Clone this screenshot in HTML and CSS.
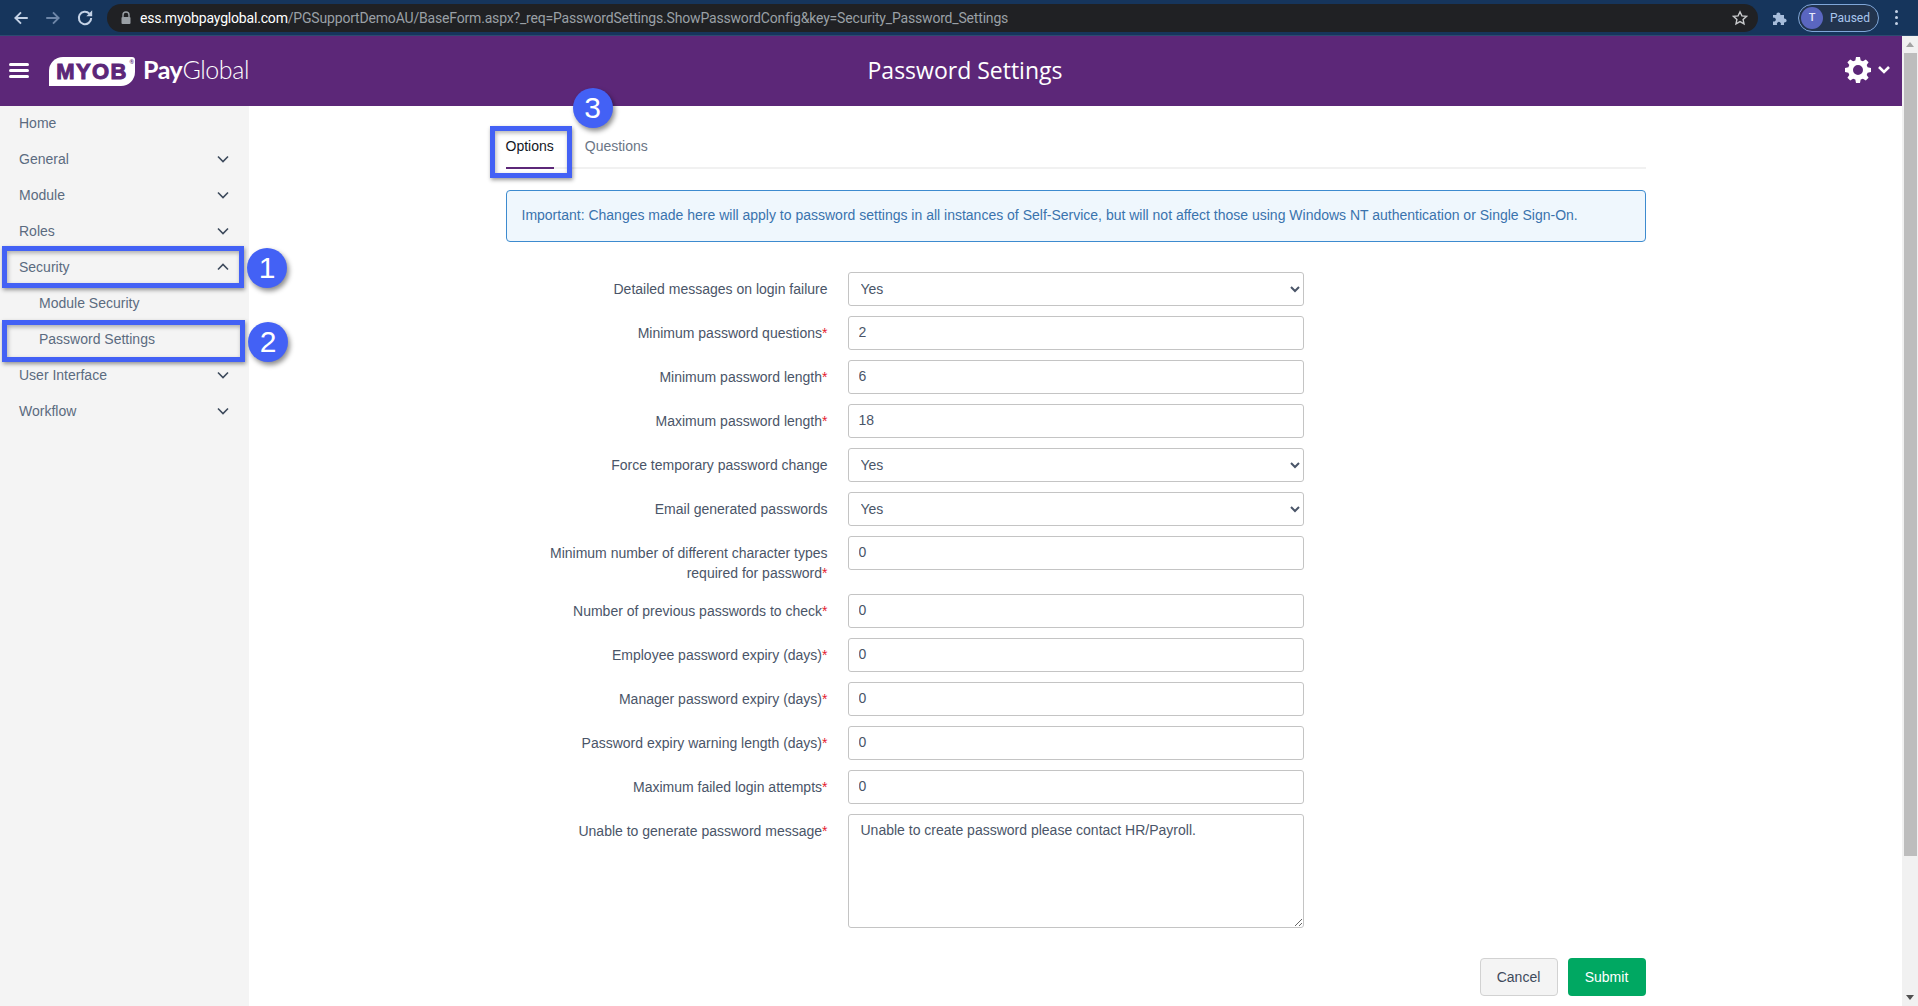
FILE: index.html
```html
<!DOCTYPE html>
<html lang="en">
<head>
<meta charset="utf-8">
<title>Password Settings</title>
<link rel="stylesheet" href="styles.css">
</head>
<body>
<div class="chrome">
  <svg class="nav-icon" viewBox="0 0 16 16"><path d="M14 8H3M8 3 3 8l5 5" fill="none" stroke="#c4d2e6" stroke-width="1.7"/></svg>
  <svg class="nav-icon" viewBox="0 0 16 16"><path d="M2 8h11M8 3l5 5-5 5" fill="none" stroke="#6e86a8" stroke-width="1.7"/></svg>
  <svg class="nav-icon" viewBox="0 0 16 16"><path d="M13.5 8a5.5 5.5 0 1 1-1.6-3.9" fill="none" stroke="#c4d2e6" stroke-width="1.8"/><path d="M14.4 1.2v5.2H9.2z" fill="#c4d2e6"/></svg>
  <div class="omnibox">
    <svg class="lock" viewBox="0 0 12 14"><path d="M3 6V4a3 3 0 0 1 6 0v2" fill="none" stroke="#9aa0a6" stroke-width="1.4"/><rect x="1.5" y="6" width="9" height="7" rx="1" fill="#9aa0a6"/></svg>
    <span class="url"><span class="host">ess.myobpayglobal.com</span>/PGSupportDemoAU/BaseForm.aspx?_req=PasswordSettings.ShowPasswordConfig&amp;key=Security_Password_Settings</span>
    <svg class="star" viewBox="0 0 16 16"><path d="m8 1.8 1.9 4.1 4.5.5-3.3 3 .9 4.4L8 11.6l-4 2.2.9-4.4-3.3-3 4.5-.5z" fill="none" stroke="#c8cacc" stroke-width="1.4"/></svg>
  </div>
  <svg class="puzzle" viewBox="0 0 16 16"><path d="M1 5h3.5a2 2 0 1 1 3.8 0H12v3.6a2 2 0 1 1 0 3.8V15H8.6a2 2 0 1 0-3.4 0H1v-3.6a2 2 0 1 0 0-3.6z" fill="#a7bddb"/></svg>
  <div class="profile"><span class="avatar">T</span><span class="paused">Paused</span></div>
  <div class="kebab"><i></i><i></i><i></i></div>
</div>
<div class="window">
  <div class="app">
    <header class="appbar">
      <div class="burger"><i></i><i></i><i></i></div>
      <div class="logo"><span class="myob">MYOB<span class="reg">®</span></span><span class="pg"><b>Pay</b>Global</span></div>
      <h1 class="title">Password Settings</h1>
      <div class="settings">
        <svg class="gear" viewBox="0 0 26 26"><path fill="#fff" fill-rule="evenodd" d="M11 0h4l.7 3.4 2.2.9 2.9-1.9 2.8 2.8-1.9 2.9.9 2.2L26 11v4l-3.4.7-.9 2.2 1.9 2.9-2.8 2.8-2.9-1.9-2.2.9L15 26h-4l-.7-3.4-2.2-.9-2.9 1.9-2.8-2.8 1.9-2.9-.9-2.2L0 15v-4l3.4-.7.9-2.2-1.9-2.9 2.8-2.8 2.9 1.9 2.2-.9zM13 8a5 5 0 1 0 0 10 5 5 0 0 0 0-10z"/></svg>
        <svg class="caret" viewBox="0 0 14 10"><path d="m2 2 5 5 5-5" fill="none" stroke="#fff" stroke-width="2.6"/></svg>
      </div>
    </header>
    <div class="body">
      <nav class="sidebar">
        <a class="nav-item">Home</a>
        <a class="nav-item">General<svg class="chev" viewBox="0 0 12 8"><path d="m1 1.5 5 5 5-5" /></svg></a>
        <a class="nav-item">Module<svg class="chev" viewBox="0 0 12 8"><path d="m1 1.5 5 5 5-5" /></svg></a>
        <a class="nav-item">Roles<svg class="chev" viewBox="0 0 12 8"><path d="m1 1.5 5 5 5-5" /></svg></a>
        <a class="nav-item marked">Security<svg class="chev" viewBox="0 0 12 8"><path d="m1 6.5 5-5 5 5" /></svg><span class="hilite hl-nav"></span><span class="badge badge-nav">1</span></a>
        <a class="nav-item sub">Module Security</a>
        <a class="nav-item sub marked">Password Settings<span class="hilite hl-nav hl-nav2"></span><span class="badge badge-nav badge-nav2">2</span></a>
        <a class="nav-item">User Interface<svg class="chev" viewBox="0 0 12 8"><path d="m1 1.5 5 5 5-5" /></svg></a>
        <a class="nav-item">Workflow<svg class="chev" viewBox="0 0 12 8"><path d="m1 1.5 5 5 5-5" /></svg></a>
      </nav>
      <main class="content">
        <div class="panel">
          <div class="tabs">
            <a class="tab active">Options<span class="hilite hl-tab"></span><span class="badge badge-tab">3</span></a>
            <a class="tab">Questions</a>
          </div>
          <div class="notice">Important: Changes made here will apply to password settings in all instances of Self-Service, but will not affect those using Windows NT authentication or Single Sign-On.</div>
          <form class="form">
            <label class="lbl">Detailed messages on login failure</label>
            <select class="ctl"><option>Yes</option></select>
            <label class="lbl">Minimum password questions<em>*</em></label>
            <input class="ctl" value="2">
            <label class="lbl">Minimum password length<em>*</em></label>
            <input class="ctl" value="6">
            <label class="lbl">Maximum password length<em>*</em></label>
            <input class="ctl" value="18">
            <label class="lbl">Force temporary password change</label>
            <select class="ctl"><option>Yes</option></select>
            <label class="lbl">Email generated passwords</label>
            <select class="ctl"><option>Yes</option></select>
            <label class="lbl">Minimum number of different character types required for password<em>*</em></label>
            <input class="ctl" value="0">
            <label class="lbl">Number of previous passwords to check<em>*</em></label>
            <input class="ctl" value="0">
            <label class="lbl">Employee password expiry (days)<em>*</em></label>
            <input class="ctl" value="0">
            <label class="lbl">Manager password expiry (days)<em>*</em></label>
            <input class="ctl" value="0">
            <label class="lbl">Password expiry warning length (days)<em>*</em></label>
            <input class="ctl" value="0">
            <label class="lbl">Maximum failed login attempts<em>*</em></label>
            <input class="ctl" value="0">
            <label class="lbl">Unable to generate password message<em>*</em></label>
            <textarea class="ctl area">Unable to create password please contact HR/Payroll.</textarea>
          </form>
          <div class="actions">
            <button class="btn cancel" type="button">Cancel</button>
            <button class="btn submit" type="button">Submit</button>
          </div>
        </div>
      </main>
    </div>
  </div>
  <div class="scrollbar">
    <svg class="arrow" viewBox="0 0 16 17"><path d="M4 11h8L8 6z" fill="#a3a3a3"/></svg>
    <div class="thumb"></div>
    <svg class="arrow" viewBox="0 0 16 17"><path d="M4 6h8l-4 5z" fill="#505050"/></svg>
  </div>
</div>
</body>
</html>
```
FILE: styles.css
```css
* { box-sizing: border-box; }
html, body { margin: 0; height: 100%; overflow: hidden; }
body {
  display: flex;
  flex-direction: column;
  height: 1006px;
  font-family: "Liberation Sans", Arial, sans-serif;
  font-size: 14px;
  color: #4a5568;
  background: #fff;
}

/* browser toolbar */
.chrome {
  flex: none;
  height: 36px;
  display: flex;
  align-items: center;
  background: #16355c;
  border-bottom: 1px solid #2c4a70;
  padding-left: 12px;
}
.nav-icon { width: 18px; height: 18px; margin-right: 14px; flex: none; }
.omnibox {
  flex: none;
  width: 1651px;
  margin-left: -1px;
  height: 28px;
  border-radius: 14px;
  background: #202124;
  display: flex;
  align-items: center;
  padding: 0 10px 0 13px;
  font-family: "Roboto", "Liberation Sans", sans-serif;
  font-size: 14px;
}
.lock { width: 12px; height: 14px; flex: none; margin-right: 8px; }
.url { color: #9aa0a6; white-space: nowrap; flex: 1; letter-spacing: -0.18px; }
.host { color: #fff; }
.star { width: 16px; height: 16px; flex: none; }
.puzzle { width: 16px; height: 16px; flex: none; margin-left: 14px; }
.profile {
  flex: none;
  margin-left: 10px;
  width: 81px;
  height: 28px;
  border: 1px solid #7fa6d8;
  border-radius: 14px;
  background: #22344e;
  display: flex;
  align-items: center;
  padding-left: 2px;
}
.avatar {
  width: 22px;
  height: 22px;
  border-radius: 50%;
  background: #5a66c0;
  color: #e6e9fb;
  font: 500 11px "Roboto", sans-serif;
  display: flex;
  align-items: center;
  justify-content: center;
}
.paused { margin-left: 7px; color: #a9c6ee; font: 12px "Roboto", sans-serif; }
.kebab { margin-left: 16px; display: flex; flex-direction: column; gap: 3px; }
.kebab i { width: 3px; height: 3px; border-radius: 50%; background: #c4d2e6; display: block; }

/* layout */
.window { flex: 1; min-height: 0; display: flex; }
.app { flex: 1; min-width: 0; display: flex; flex-direction: column; }
.appbar {
  flex: none;
  height: 70px;
  background: #5c2778;
  display: flex;
  align-items: center;
  position: relative;
  padding-left: 9px;
}
.burger { display: flex; flex-direction: column; gap: 3px; width: 20px; margin-top: -2px; }
.burger i { display: block; height: 3px; border-radius: 2px; background: #fff; }
.logo { margin-left: 20px; display: flex; align-items: center; }
.myob {
  position: relative;
  width: 86px;
  height: 29px;
  background: #fff;
  border-radius: 14px 3px 14px 0;
  color: #5c2778;
  font: 700 22px "Liberation Sans", sans-serif;
  -webkit-text-stroke: 1px #5c2778;
  letter-spacing: 1.4px;
  text-align: center;
  line-height: 29px;
}
.reg {
  position: absolute;
  right: 1px;
  top: 2px;
  font-size: 6px;
  line-height: 6px;
  letter-spacing: 0;
  -webkit-text-stroke: 0;
}
.pg { margin-left: 8px; margin-bottom: 4px; color: #fff; font: 300 25px "Lato", "Noto Sans", sans-serif; letter-spacing: -0.4px; }
.pg b { font-weight: 700; }
.title {
  margin: 0 auto;
  position: absolute;
  left: 0;
  right: 0;
  top: 18px;
  text-align: center;
  padding-left: 28px;
  font: 400 23px "Open Sans", "Noto Sans", sans-serif;
  color: #fff;
  pointer-events: none;
}
.settings { margin-left: auto; margin-right: 11px; display: flex; align-items: center; gap: 6px; margin-top: -2px; }
.gear { width: 26px; height: 26px; }
.caret { width: 14px; height: 10px; }
.body { flex: 1; min-height: 0; display: flex; }

/* sidebar */
.sidebar { flex: none; width: 249px; background: #f4f4f4; }
.nav-item {
  position: relative;
  display: flex;
  align-items: center;
  justify-content: space-between;
  height: 36px;
  padding: 0 20px 0 19px;
  color: #5b6b80;
}
.nav-item:first-child { margin-top: -1px; }
.nav-item.sub { padding-left: 39px; }
.chev { width: 12px; height: 8px; fill: none; stroke: #3d4a5c; stroke-width: 1.6; }

/* annotations */
.hilite {
  position: absolute;
  border: 5px solid #4361f5;
  box-shadow: 1px 2px 4px rgba(0,0,0,.4), inset 1px 2px 4px rgba(0,0,0,.3);
}
.hl-nav { left: 2px; top: -3px; width: 242px; height: 42px; }
.hl-nav2 { width: 243px; top: -1px; }
.hl-tab { left: -16px; top: 0; width: 82px; height: 52px; }
.badge {
  position: absolute;
  width: 40px;
  height: 40px;
  border-radius: 50%;
  background: #4361f5;
  color: #fff;
  font: 30px/40px "Liberation Sans", sans-serif;
  text-align: center;
  box-shadow: 2px 3px 5px rgba(0,0,0,.45);
}
.badge-nav { left: 247px; top: -1px; }
.badge-nav2 { left: 248px; top: 1px; }
.badge-tab { left: 67px; top: -38px; }

/* content */
.content { flex: 1; min-width: 0; display: flex; justify-content: center; }
.panel { width: 1140px; }
.tabs {
  display: flex;
  height: 63px;
  padding-top: 20px;
  border-bottom: 2px solid #f1f1f1;
  gap: 31px;
}
.tab { position: relative; height: 43px; padding-top: 12px; color: #6b7686; }
.tab.active { color: #14171f; border-bottom: 2px solid #5c2778; }
.notice {
  margin-top: 21px;
  height: 52px;
  border: 1px solid #3d8bcf;
  border-radius: 4px;
  background: #eff7fd;
  color: #3a73ad;
  padding: 0 15px 2px;
  display: flex;
  align-items: center;
}
.form {
  margin-top: 30px;
  display: grid;
  grid-template-columns: 322px 456px;
  column-gap: 20px;
  row-gap: 10px;
}
.lbl { text-align: right; padding: 7px 0 1px; line-height: 20px; color: #4a5568; }
.lbl em { color: #e5202e; font-style: normal; }
.ctl {
  width: 456px;
  height: 34px;
  border: 1px solid #c4c4c4;
  border-radius: 3px;
  background: #fff;
  padding: 0 12px;
  font: 14px "Liberation Sans", sans-serif;
  color: #4a5568;
}
input.ctl { padding: 0 12px 2px 10px; }
select.ctl { padding-left: 8px; }
.area { height: 114px; padding: 7px 12px; display: block; resize: both; }
.actions { margin-top: 30px; display: flex; justify-content: flex-end; gap: 10px; }
.btn {
  height: 38px;
  border-radius: 4px;
  font: 14px "Liberation Sans", sans-serif;
}
.cancel { width: 78px; border: 1px solid #d2d2d2; background: #f4f4f4; color: #3e4a5c; }
.submit { width: 78px; border: 0; background: #00a862; color: #fff; }

/* scrollbar */
.scrollbar { flex: none; width: 16px; background: #f1f1f1; display: flex; flex-direction: column; }
.arrow { width: 16px; height: 17px; flex: none; display: block; }
.thumb { flex: none; height: 803px; margin: 0 1px 0 2px; background: #bdbdbd; }
.scrollbar .arrow:last-child { margin-top: auto; }
```
